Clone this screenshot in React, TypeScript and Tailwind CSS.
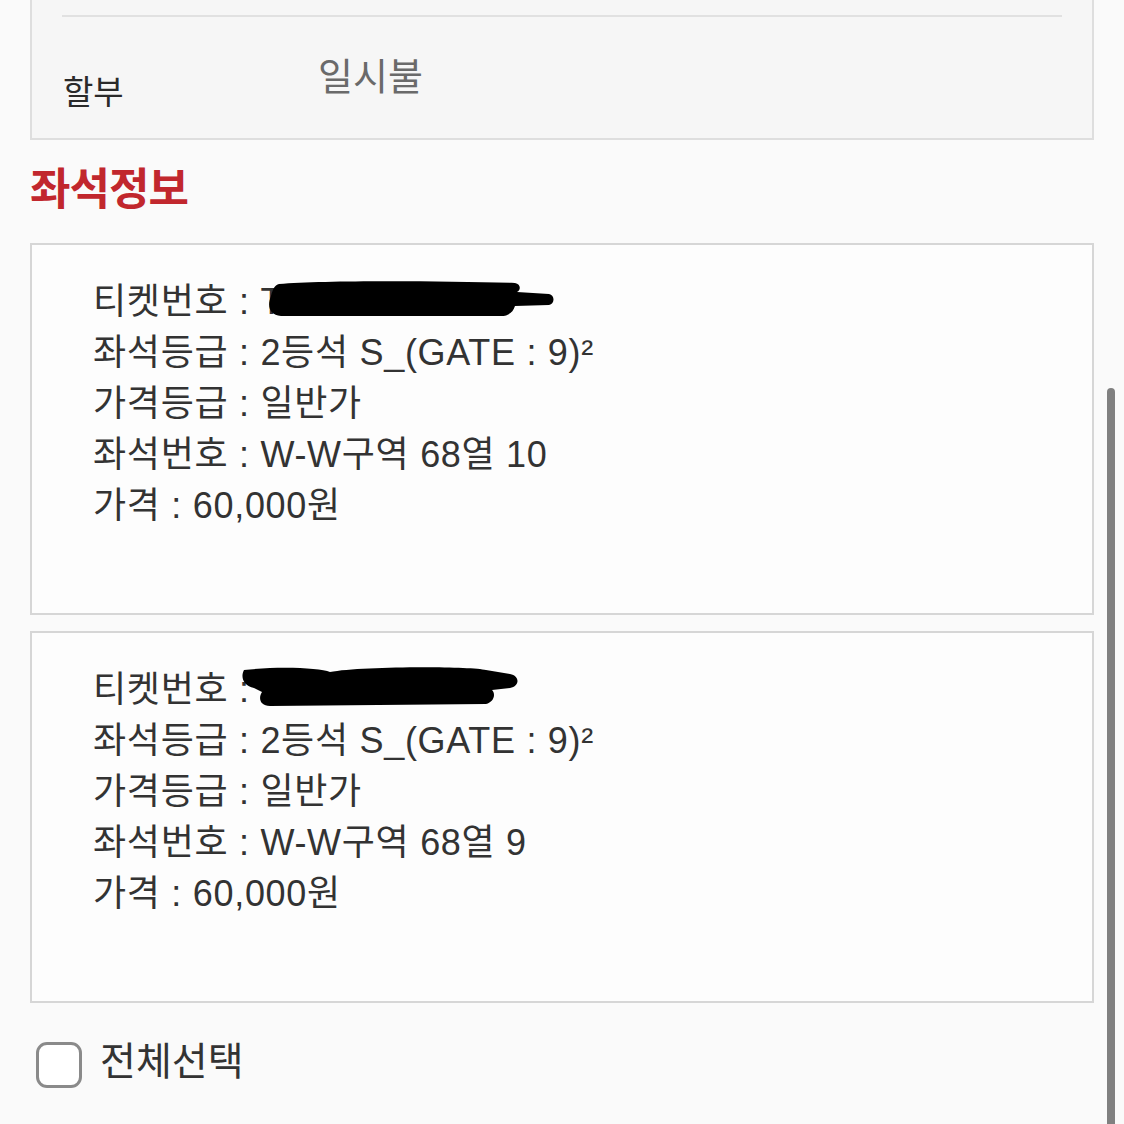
import React from 'react';

const font = { fontFamily: '"Liberation Sans", "Noto Sans CJK KR", sans-serif' };

type Ticket = {
  grade: string;
  price: string;
  seat: string;
  amount: string;
  variant: 1 | 2;
};

const tickets: Ticket[] = [
  { grade: '2등석 S_(GATE : 9)²', price: '일반가', seat: 'W-W구역 68열 10', amount: '60,000원', variant: 1 },
  { grade: '2등석 S_(GATE : 9)²', price: '일반가', seat: 'W-W구역 68열 9', amount: '60,000원', variant: 2 },
];

// marker scribble over the ticket number
function Redaction({ variant }: { variant: 1 | 2 }) {
  if (variant === 1) {
    return (
      <svg width="290" height="40" viewBox="0 0 290 40" className="absolute left-[-18px] top-[4px]">
        <path d="M14 4 C60 0 180 1 250 3 C256 4 256 10 252 12 L284 14 C290 15 290 24 284 25 L250 26 C248 32 244 36 236 36 L16 36 C4 35 2 26 6 16 C8 8 10 5 14 4 Z" fill="#000" />
      </svg>
    );
  }
  return (
    <svg width="290" height="46" viewBox="0 0 290 46" className="absolute left-[-10px] top-[0px]">
      <path d="M4 6 C40 2 80 4 90 8 C120 2 230 2 246 6 L270 10 C280 12 280 22 270 24 L252 26 C256 30 254 38 246 40 L30 42 C20 42 18 34 22 28 L14 24 C4 22 0 14 4 6 Z" fill="#000" />
    </svg>
  );
}

function TicketCard({ t }: { t: Ticket }) {
  return (
    <div className="border-2 border-[#d6d6d6] bg-[#fdfdfd] h-[372px] pl-[61px] pt-[31px] text-[36px] leading-[51px] text-[#333] tracking-[0.7px]">
      <div className="flex h-[51px]">
        <span>티켓번호 : {t.variant === 1 ? 'T' : ''}</span>
        <span className="relative inline-block w-[10px]">
          <Redaction variant={t.variant} />
        </span>
      </div>
      <div className="h-[51px]">좌석등급 : {t.grade}</div>
      <div className="h-[51px]">가격등급 : {t.price}</div>
      <div className="h-[51px]">좌석번호 : {t.seat}</div>
      <div className="h-[51px]">가격 : {t.amount}</div>
    </div>
  );
}

export default function App() {
  return (
    <div className="relative w-[1124px] h-[1124px] overflow-hidden bg-[#fafafa]" style={font}>
      <div className="ml-[30px] w-[1064px]">
        {/* 결제 정보 박스 (위는 잘림) */}
        <div className="h-[140px] border-2 border-t-0 border-[#dedede] bg-[#f6f6f6] pt-[15px]">
          <div className="mx-[30px] h-[2px] bg-[#e1e1e1]" />
          <div className="flex items-start pl-[31px] pt-[36px]">
            <span className="w-[255px] pt-[20px] text-[33px] leading-[40px] text-[#2a2a2a]">할부</span>
            <span className="text-[38px] leading-[44px] text-[#6a6a6a] mt-[2px]">일시불</span>
          </div>
        </div>

        <h2 className="mt-[24px] text-[44px] leading-[52px] font-bold text-[#c1272d] tracking-[-1px]">좌석정보</h2>

        <div className="mt-[27px] flex flex-col gap-[16px]">
          {tickets.map((t, i) => (
            <TicketCard key={i} t={t} />
          ))}
        </div>

        <label className="mt-[39px] flex items-center gap-[18px] pl-[6px]">
          <span className="w-[46px] h-[46px] rounded-[11px] border-[3px] border-[#8a8a8a] bg-white" />
          <span className="text-[39px] leading-[46px] text-[#333] -mt-[6px]">전체선택</span>
        </label>
      </div>

      {/* scrollbar */}
      <div className="absolute right-[9px] top-[388px] bottom-0 w-[8px] rounded-t-full bg-[#808080]" />
    </div>
  );
}
